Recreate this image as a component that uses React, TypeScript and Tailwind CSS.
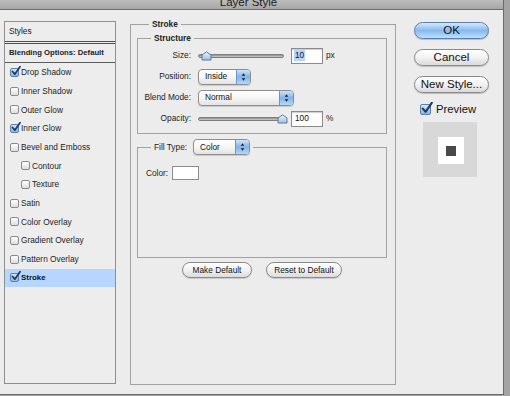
import React from "react";

const FONT = "font-['Liberation_Sans',Arial,sans-serif]";

function CheckBox({ checked, big }: { checked?: boolean; big?: boolean }) {
  const size = big ? "w-[11px] h-[11px]" : "w-[9px] h-[9px]";
  const fill = checked
    ? "bg-gradient-to-b from-[#d6e7f9] to-[#8cb4e2] border-[#5d7fa8]"
    : "bg-gradient-to-b from-white to-[#dedede] border-[#8a8a8a]";
  return (
    <span className={`relative inline-block shrink-0 rounded-[2px] border ${size} ${fill}`}>
      {checked && (
        <svg
          viewBox="0 0 12 12"
          className={big ? "absolute -top-[3px] left-[0px] w-[12px] h-[12px]" : "absolute -top-[3px] left-[0px] w-[10px] h-[10px]"}
        >
          <path d="M1.8 6.6 L4.6 9.8 L10.8 0.8" fill="none" stroke="#1b3a6b" strokeWidth="2.1" strokeLinecap="round" strokeLinejoin="round" />
        </svg>
      )}
    </span>
  );
}

function Arrows() {
  return (
    <svg viewBox="0 0 14 16" className="w-[14px] h-full">
      <path d="M5 6.6 L7 3.8 L9 6.6 Z" fill="#1d1d1d" />
      <path d="M5 9.4 L7 12.2 L9 9.4 Z" fill="#1d1d1d" />
    </svg>
  );
}

function Popup({ label, w }: { label: string; w: string }) {
  return (
    <div className={`flex h-[16px] ${w} rounded-[4px] border border-[#8d8d8d] bg-gradient-to-b from-white via-[#f6f6f6] to-[#e3e3e3] shadow-[0_1px_1px_rgba(0,0,0,0.15)] overflow-hidden`}>
      <div className="flex-1 flex items-center pl-[6px] text-[8.3px] text-[#111]">{label}</div>
      <div className="w-[14px] h-full border-l border-[#6f93c4] bg-gradient-to-b from-[#cfe3f8] via-[#7eb3ea] to-[#b5d8f8] flex items-center justify-center">
        <Arrows />
      </div>
    </div>
  );
}

function Slider({ pos }: { pos: number }) {
  return (
    <div className="relative w-[86px] h-[16px] flex items-center">
      <div className="w-full h-[4px] rounded-full border border-[#7e7e7e] bg-gradient-to-b from-[#8c8c8c] to-[#cfcfcf]" />
      <svg viewBox="0 0 11 10" className="absolute top-[3px] w-[11px] h-[10px]" style={{ left: pos }}>
        <path d="M1 4 L5.5 0.8 L10 4 L10 9 L1 9 Z" fill="url(#thumbg)" stroke="#5a6f8c" strokeWidth="0.9" />
        <defs>
          <linearGradient id="thumbg" x1="0" y1="0" x2="0" y2="1">
            <stop offset="0" stopColor="#e9f2fc" />
            <stop offset="1" stopColor="#9ec2e8" />
          </linearGradient>
        </defs>
      </svg>
    </div>
  );
}

function Field({ value, selected }: { value: string; selected?: boolean }) {
  return (
    <div className="w-[32px] h-[16px] border border-[#8b8b8b] bg-white shadow-[inset_0_1px_1px_rgba(0,0,0,0.2)] flex items-center pl-[2px] text-[8.3px] text-[#111]">
      {selected ? <span className="bg-[#b5d4fe] px-[1px] leading-[11px]">{value}</span> : <span className="px-[1px]">{value}</span>}
    </div>
  );
}

function SmallButton({ label, w }: { label: string; w: string }) {
  return (
    <div className={`${w} h-[16px] rounded-full border border-[#8a8a8a] bg-gradient-to-b from-white via-[#f2f2f2] to-[#dcdcdc] shadow-[0_1px_1px_rgba(0,0,0,0.15)] flex items-center justify-center text-[8.3px] text-[#111]`}>
      {label}
    </div>
  );
}

function BigButton({ label, primary }: { label: string; primary?: boolean }) {
  return (
    <div
      className={
        primary
          ? "w-[75px] h-[17px] rounded-full border border-[#5b7fb4] bg-gradient-to-b from-[#d7e9fb] via-[#86b9ec] to-[#bfe0fc] shadow-[0_1px_1px_rgba(0,0,0,0.2)] flex items-center justify-center text-[11.5px] text-[#111]"
          : "w-[75px] h-[17px] rounded-full border border-[#8a8a8a] bg-gradient-to-b from-white via-[#f2f2f2] to-[#dadada] shadow-[0_1px_1px_rgba(0,0,0,0.2)] flex items-center justify-center text-[11.5px] text-[#111]"
      }
    >
      {label}
    </div>
  );
}

const items: { label: string; checked?: boolean; indent?: boolean; selected?: boolean }[] = [
  { label: "Drop Shadow", checked: true },
  { label: "Inner Shadow" },
  { label: "Outer Glow" },
  { label: "Inner Glow", checked: true },
  { label: "Bevel and Emboss" },
  { label: "Contour", indent: true },
  { label: "Texture", indent: true },
  { label: "Satin" },
  { label: "Color Overlay" },
  { label: "Gradient Overlay" },
  { label: "Pattern Overlay" },
  { label: "Stroke", checked: true, selected: true },
];

function Row({ label, children }: { label: string; children: React.ReactNode }) {
  return (
    <div className="flex items-center h-[21px]">
      <div className="w-[53px] text-right text-[8.3px] text-[#222] whitespace-nowrap">{label}</div>
      <div className="ml-[7px] flex items-center">{children}</div>
    </div>
  );
}

export default function App() {
  return (
    <div className={`w-[510px] h-[396px] bg-[#a4a4a4] overflow-hidden ${FONT}`}>
      <div className="w-[504px] h-[395px] bg-[#ececec] border-r border-b border-[#6a6a6a] flex flex-col">
        {/* title bar */}
        <div className="h-[10px] shrink-0 bg-gradient-to-b from-[#bdbdbd] to-[#a6a6a6] border-b border-[#6c6c6c] overflow-hidden flex justify-center pr-[6px]">
          <span className="text-[11.5px] leading-[11px] -mt-[3px] text-[#1c1c1c]">Layer Style</span>
        </div>

        <div className="flex items-start">
          {/* left styles list */}
          <div className="ml-[4px] mt-[11px] w-[112px] h-[363px] border border-[#8f8f8f] bg-[#ededed] flex flex-col">
            <div className="h-[22px] shrink-0 flex items-center pl-[4px] text-[8.3px] text-[#222] border-b-[3px] border-double border-[#4f4f4f]">
              Styles
            </div>
            <div className="h-[19px] shrink-0 flex items-center pl-[4px] text-[7.7px] font-bold text-[#222] border-b border-[#5c5c5c] whitespace-nowrap">
              Blending Options: Default
            </div>
            {items.map((it) => (
              <div
                key={it.label}
                className={
                  (it.selected ? "bg-[#b6d5ff] " : "") +
                  (it.indent ? "pl-[16px] " : "pl-[5px] ") +
                  "h-[18.7px] shrink-0 flex items-center gap-[2px]"
                }
              >
                <CheckBox checked={it.checked} />
                <span className={it.selected ? "text-[7.9px] font-bold text-[#111]" : "text-[8.3px] text-[#1d1d1d]"}>{it.label}</span>
              </div>
            ))}
          </div>

          {/* Stroke group */}
          <fieldset className="ml-[14px] mt-[9px] w-[266px] h-[366px] border border-[#a2a2a2] pt-[4px] pl-[6px] pr-[8px]">
            <legend className="ml-[12px] px-[3px] text-[8.3px] leading-[10px] font-bold text-[#222]">Stroke</legend>

            <fieldset className="w-[250px] border border-[#a2a2a2] pt-[2px] pb-[4px] pl-0">
              <legend className="ml-[13px] px-[3px] text-[8.3px] leading-[10px] font-bold text-[#222]">Structure</legend>
              <Row label="Size:">
                <Slider pos={3} />
                <div className="ml-[7px]">
                  <Field value="10" selected />
                </div>
                <span className="ml-[3px] text-[8.3px] text-[#222]">px</span>
              </Row>
              <Row label="Position:">
                <Popup label="Inside" w="w-[53px]" />
              </Row>
              <Row label="Blend Mode:">
                <Popup label="Normal" w="w-[96px]" />
              </Row>
              <Row label="Opacity:">
                <Slider pos={79} />
                <div className="ml-[7px]">
                  <Field value="100" />
                </div>
                <span className="ml-[3px] text-[8.3px] text-[#222]">%</span>
              </Row>
            </fieldset>

            <fieldset className="mt-[5px] w-[250px] h-[119px] border border-[#a2a2a2] pl-[8px]">
              <legend className="ml-[5px] px-[3px] flex items-center">
                <span className="text-[8.3px] text-[#222]">Fill Type:</span>
                <div className="ml-[6px]">
                  <Popup label="Color" w="w-[57px]" />
                </div>
              </legend>
              <div className="mt-[11px] flex items-center">
                <span className="text-[8.3px] text-[#222]">Color:</span>
                <div className="ml-[4px] w-[27px] h-[14px] border border-[#8c8c8c] bg-white" />
              </div>
            </fieldset>

            <div className="mt-[4px] flex justify-center gap-[14px]">
              <SmallButton label="Make Default" w="w-[70px]" />
              <SmallButton label="Reset to Default" w="w-[76px]" />
            </div>
          </fieldset>

          {/* right column */}
          <div className="ml-[18px] mt-[12px] w-[75px] flex flex-col">
            <BigButton label="OK" primary />
            <div className="mt-[10px]">
              <BigButton label="Cancel" />
            </div>
            <div className="mt-[10px]">
              <BigButton label="New Style..." />
            </div>
            <div className="mt-[11px] ml-[6px] flex items-center gap-[5px]">
              <CheckBox checked big />
              <span className="text-[11.3px] leading-[11px] text-[#111]">Preview</span>
            </div>
            <div className="mt-[7px] ml-[9px] w-[54px] h-[55px] bg-[#d8d8d8] flex items-center justify-center pl-[2px] pt-[2px]">
              <div className="w-[26px] h-[27px] bg-white flex items-center justify-center">
                <div className="w-[10px] h-[10px] bg-[#4a4a4a]" />
              </div>
            </div>
          </div>
        </div>
      </div>
    </div>
  );
}
